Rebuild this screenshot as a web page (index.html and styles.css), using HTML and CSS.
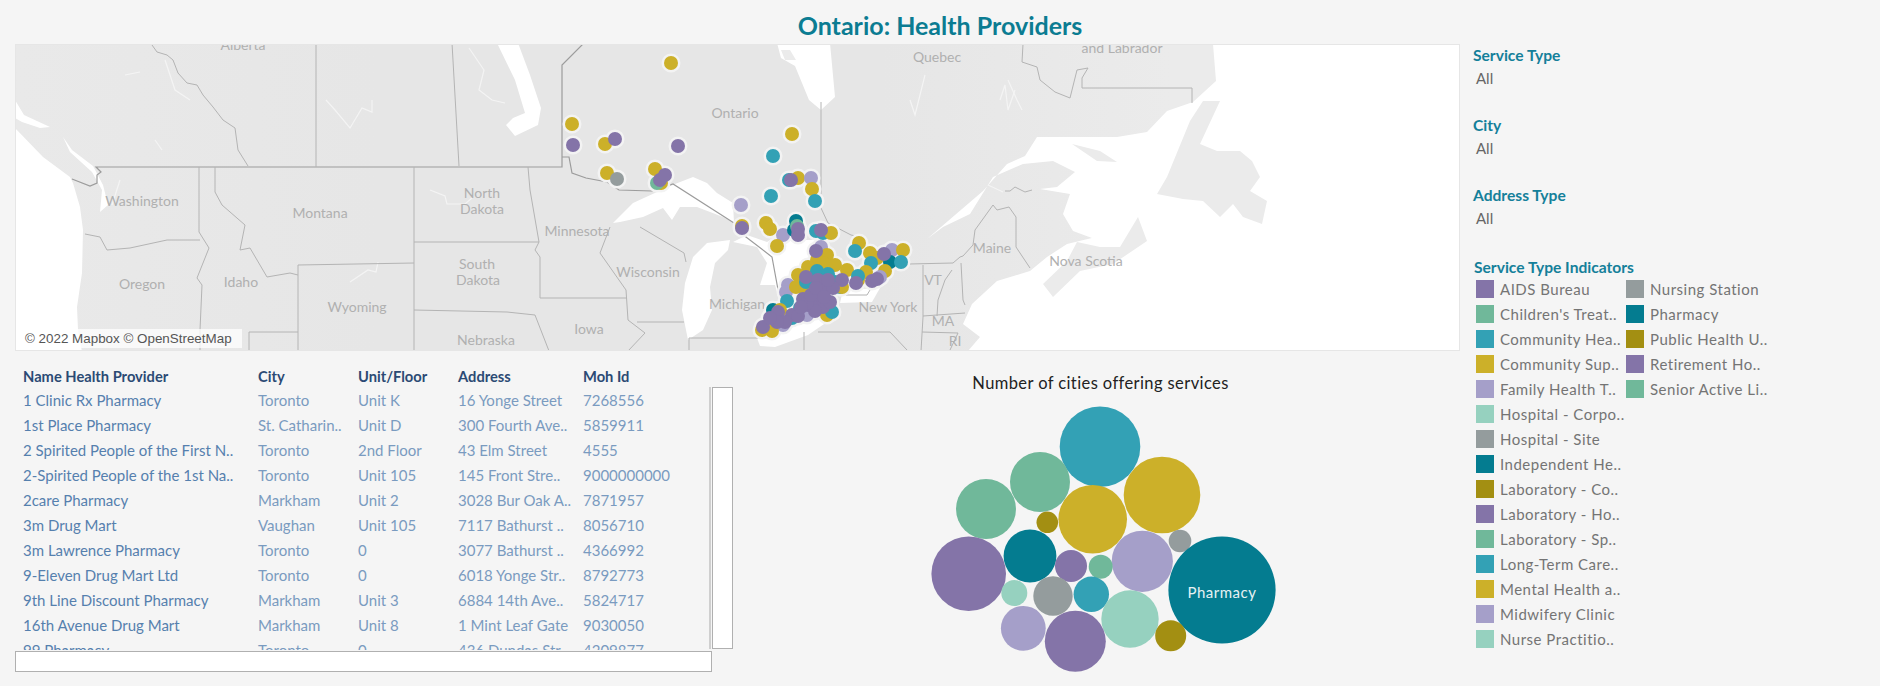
FILE: index.html
```html
<!DOCTYPE html>
<html lang="en">
<head>
<meta charset="utf-8">
<title>Ontario: Health Providers</title>
<link rel="stylesheet" href="styles.css">
</head>
<body>
<div class="page">
  <h1 class="title">Ontario: Health Providers</h1>
  <div class="main">
    <div class="left">
      <div class="map">
        <svg class="map-svg" viewBox="15 44 1445 307" width="1445" height="307">
          <defs>
            <linearGradient id="landfill" x1="0" x2="1" y1="0" y2="0">
              <stop offset="0" stop-color="#e9e9e9"/>
              <stop offset="0.25" stop-color="#e6e6e6"/>
              <stop offset="0.6" stop-color="#e6e6e6"/>
              <stop offset="0.8" stop-color="#ebebeb"/>
            </linearGradient>
          </defs>
          <rect class="land" x="15" y="44" width="1445" height="307"/>
          <g class="water">
            <polygon points="15,128 43,157 70,177 73,183 80,207 83,230 82,273 77,307 78,330 82,352 15,352"/>
            <polygon points="15,100 24,115 50,127 40,128 22,122 15,118"/>
            <polygon points="63,137 72,150 93,166 103,185 108,205 100,212 102,190 92,172 70,152"/>
            <polygon points="613,223 633,203 657,192 675,184 693,177 707,183 717,193 733,203 734,223 723,217 697,207 680,207 672,220 663,208 643,217 620,222"/>
            <polygon points="730,240 707,243 693,257 685,283 682,310 688,340 703,330 712,310 710,287 715,263 728,250"/>
            <polygon points="733,242 747,235 767,242 778,235 800,240 828,240 830,262 813,267 805,290 795,300 780,303 775,285 760,285 767,263 757,247"/>
            <polygon points="757,338 775,325 820,315 830,320 808,335 775,347 760,346"/>
            <polygon points="843,290 880,288 872,302 840,303"/>
            <polygon points="777,43 830,43 835,97 821,110 809,100 795,66 781,58"/>
            <polygon points="497,43 518,43 530,75 541,108 538,125 515,136 506,125 513,118 525,113 515,80"/>
            <polygon points="1213,44 1216,81 1193,102 1167,111 1147,132 1117,137 1037,137 1025,156 1007,164 983,191 927,239 943,227 970,214 993,177 1023,164 1053,161 1075,172 1057,187 1040,189 1070,194 1063,214 1073,231 1100,241 1117,231 1100,236 1067,244 1047,257 1030,271 997,281 972,304 963,324 980,337 968,351 1460,351 1460,44"/>
          </g>
          <g class="land-shape">
            <polygon points="781,50 790,50 796,60 785,60"/>
            <polygon points="1043,284 1067,261 1077,242 1100,247 1120,247 1138,217 1147,241 1113,264 1080,271 1053,297"/>
            <polygon points="1157,194 1167,177 1190,121 1203,101 1220,101 1200,144 1217,151 1240,151 1252,161 1260,177 1250,191 1267,201 1262,224 1243,217 1233,204 1220,217 1203,201 1183,199"/>
            <polygon points="1072,144 1100,151 1117,162 1097,161"/>
          </g>
          <g class="lake-lines">
            <polyline points="326,100 335,110 350,128 362,108 372,112 372,100"/>
            <polyline points="469,48 484,70 479,90 492,100 505,103"/>
            <polyline points="430,190 445,196 447,204 465,204 472,198"/>
            <polyline points="350,282 368,270 376,272 378,262"/>
            <polyline points="165,60 175,90 190,100"/>
            <polyline points="125,75 140,72"/>
            <polyline points="112,205 120,180"/>
            <polyline points="155,140 162,150"/>
            <polyline points="1008,80 1017,100 1022,110"/>
            <polyline points="910,100 915,115 925,75"/>
            <polyline points="988,185 1003,192"/>
            <polyline points="1000,100 1005,85 1008,110 1015,90"/>
          </g>
          <g class="borders">
            <polyline class="main-line" points="72,179 90,186 97,183 97,175 101,172 96,167 562,167 562,65 584,43"/>
            <polyline class="main-line" points="562,157 569,157 572,173 586,178 607,182 619,190 652,191 673,184 734,223"/>
            <polyline class="main-line" points="734,223 737,232 746,237 772,257 779,295"/>
            <polyline points="152,45 157,52 167,55 173,60 178,73 187,83 197,85 203,95 213,107 223,120 235,128 238,150 248,166"/>
            <polyline points="316,43 316,167"/>
            <polyline points="452,43 459,166"/>
            <polyline points="199,167 199,232 209,248 197,278 202,285 200,330 200,351"/>
            <polyline points="85,234 100,237 107,250 130,248 167,240 200,240"/>
            <polyline points="215,167 215,192 222,205 245,225 240,250 250,248 267,277 290,273 298,275"/>
            <polyline points="298,265 414,263"/>
            <polyline points="298,265 298,351"/>
            <polyline points="414,167 414,351"/>
            <polyline points="414,242 539,242"/>
            <polyline points="414,310 507,312 535,315 549,351"/>
            <polyline points="528,167 530,190 539,242 535,250 540,257 540,298 627,298"/>
            <polyline points="610,227 600,253 626,290 628,320 645,333 628,351"/>
            <polyline points="640,227 684,253 686,262"/>
            <polyline points="637,322 684,322"/>
            <polyline points="689,338 758,338"/>
            <polyline points="689,338 689,351"/>
            <polyline points="249,332 298,332"/>
            <polyline points="249,332 249,351"/>
            <polyline points="821,102 821,208 828,223 851,235 865,238"/>
            <polyline points="1023,44 1022,62 1037,67 1040,80 1055,92 1070,98 1075,78 1077,70 1088,68 1082,78 1082,88 1192,88 1192,103"/>
            <polyline points="909,264 953,263 960,257 963,256 973,245 975,230 993,205 997,210 1009,207 1016,217 1016,247 1030,268"/>
            <polyline points="923,265 923,317 921,351"/>
            <polyline points="961,263 963,300 965,305"/>
            <polyline points="952,270 945,280 938,300 937,316"/>
            <polyline points="923,316 965,313"/>
            <polyline points="922,332 958,333 950,350"/>
            <polyline points="846,295 867,295 870,290"/>
            <polyline points="818,332 890,332 907,350"/>
            <polyline points="804,332 804,351"/>
            <polyline points="1005,191 1010,191 1015,187 1025,192 1032,190"/>
          </g>
          <g class="map-labels">
            <text x="243" y="50">Alberta</text>
            <text x="937" y="62">Quebec</text>
            <text x="1122" y="53">and Labrador</text>
            <text x="735" y="118">Ontario</text>
            <text x="142" y="206">Washington</text>
            <text x="320" y="218">Montana</text>
            <text x="482" y="198">North</text>
            <text x="482" y="214">Dakota</text>
            <text x="577" y="236">Minnesota</text>
            <text x="142" y="289">Oregon</text>
            <text x="241" y="287">Idaho</text>
            <text x="477" y="269">South</text>
            <text x="478" y="285">Dakota</text>
            <text x="648" y="277">Wisconsin</text>
            <text x="357" y="312">Wyoming</text>
            <text x="589" y="334">Iowa</text>
            <text x="486" y="345">Nebraska</text>
            <text x="737" y="309">Michigan</text>
            <text x="888" y="312">New York</text>
            <text x="992" y="253">Maine</text>
            <text x="1086" y="266">Nova Scotia</text>
            <text x="933" y="285">VT</text>
            <text x="943" y="326">MA</text>
            <text x="955" y="346">RI</text>
          </g>
          <use href="#dots" class="halo"/>
          <g id="dots">
            <circle class="yl" cx="671" cy="63" r="7"/>
            <circle class="yl" cx="572" cy="124" r="7"/>
            <circle class="pu" cx="573" cy="145" r="7"/>
            <circle class="yl" cx="605" cy="144" r="7"/>
            <circle class="pu" cx="615" cy="139" r="7"/>
            <circle class="pu" cx="678" cy="146" r="7"/>
            <circle class="yl" cx="607" cy="173" r="7"/>
            <circle class="gy" cx="617" cy="179" r="7"/>
            <circle class="yl" cx="655" cy="169" r="7"/>
            <circle class="yl" cx="661" cy="183" r="7"/>
            <circle class="gr" cx="657" cy="183" r="7"/>
            <circle class="pu" cx="660" cy="180" r="7"/>
            <circle class="pu" cx="665" cy="175" r="7"/>
            <circle class="yl" cx="792" cy="134" r="7"/>
            <circle class="tl" cx="773" cy="156" r="7"/>
            <circle class="tl" cx="789" cy="180" r="7"/>
            <circle class="yl" cx="798" cy="178" r="7"/>
            <circle class="pu" cx="791" cy="180" r="7"/>
            <circle class="lp" cx="811" cy="178" r="7"/>
            <circle class="yl" cx="812" cy="189" r="7"/>
            <circle class="tl" cx="771" cy="196" r="7"/>
            <circle class="tl" cx="815" cy="201" r="7"/>
            <circle class="lp" cx="741" cy="205" r="7"/>
            <circle class="yl" cx="742" cy="226" r="7"/>
            <circle class="pu" cx="742" cy="228" r="7"/>
            <circle class="yl" cx="766" cy="223" r="7"/>
            <circle class="yl" cx="770" cy="229" r="7"/>
            <circle class="lp" cx="783" cy="235" r="7"/>
            <circle class="yl" cx="777" cy="246" r="7"/>
            <circle class="dk" cx="796" cy="221" r="7"/>
            <circle class="dk" cx="794" cy="230" r="7"/>
            <circle class="gr" cx="797" cy="226" r="7"/>
            <circle class="pu" cx="798" cy="229" r="7"/>
            <circle class="pu" cx="798" cy="235" r="7"/>
            <circle class="tl" cx="816" cy="231" r="7"/>
            <circle class="tl" cx="823" cy="233" r="7"/>
            <circle class="yl" cx="831" cy="233" r="7"/>
            <circle class="pu" cx="821" cy="230" r="7"/>
            <circle class="lp" cx="821" cy="247" r="7"/>
            <circle class="yl" cx="827" cy="255" r="7"/>
            <circle class="yl" cx="817" cy="260" r="7"/>
            <circle class="yl" cx="808" cy="267" r="7"/>
            <circle class="yl" cx="823" cy="263" r="7"/>
            <circle class="yl" cx="835" cy="265" r="7"/>
            <circle class="yl" cx="847" cy="270" r="7"/>
            <circle class="yl" cx="798" cy="275" r="7"/>
            <circle class="yl" cx="815" cy="270" r="7"/>
            <circle class="lp" cx="788" cy="285" r="7"/>
            <circle class="lp" cx="786" cy="292" r="7"/>
            <circle class="yl" cx="796" cy="287" r="7"/>
            <circle class="yl" cx="806" cy="292" r="7"/>
            <circle class="pu" cx="816" cy="251" r="7"/>
            <circle class="tl" cx="817" cy="271" r="7"/>
            <circle class="tl" cx="828" cy="274" r="7"/>
            <circle class="tl" cx="806" cy="282" r="7"/>
            <circle class="pu" cx="806" cy="277" r="7"/>
            <circle class="tl" cx="787" cy="301" r="7"/>
            <circle class="tl" cx="835" cy="282" r="7"/>
            <circle class="tl" cx="840" cy="287" r="7"/>
            <circle class="yl" cx="842" cy="287" r="7"/>
            <circle class="pu" cx="842" cy="280" r="7"/>
            <circle class="yl" cx="827" cy="315" r="7"/>
            <circle class="tl" cx="832" cy="312" r="7"/>
            <circle class="dk" cx="773" cy="310" r="7"/>
            <circle class="yl" cx="780" cy="310" r="7"/>
            <circle class="tl" cx="800" cy="308" r="7"/>
            <circle class="lp" cx="807" cy="315" r="7"/>
            <circle class="tl" cx="792" cy="318" r="7"/>
            <circle class="lp" cx="783" cy="325" r="7"/>
            <circle class="yl" cx="772" cy="331" r="7"/>
            <circle class="yl" cx="762" cy="330" r="7"/>
            <circle class="pu" cx="778" cy="312" r="7"/>
            <circle class="pu" cx="792" cy="315" r="7"/>
            <circle class="pu" cx="785" cy="322" r="7"/>
            <circle class="pu" cx="798" cy="316" r="7"/>
            <circle class="pu" cx="777" cy="322" r="7"/>
            <circle class="pu" cx="763" cy="327" r="7"/>
            <circle class="pu" cx="770" cy="318" r="7"/>
            <circle class="pu" cx="803" cy="299" r="7"/>
            <circle class="pu" cx="808" cy="305" r="7"/>
            <circle class="pu" cx="815" cy="301" r="7"/>
            <circle class="pu" cx="820" cy="295" r="7"/>
            <circle class="pu" cx="818" cy="280" r="7"/>
            <circle class="pu" cx="827" cy="288" r="7"/>
            <circle class="pu" cx="833" cy="288" r="7"/>
            <circle class="pu" cx="823" cy="307" r="7"/>
            <circle class="pu" cx="815" cy="311" r="7"/>
            <circle class="pu" cx="807" cy="303" r="7"/>
            <circle class="pu" cx="830" cy="302" r="7"/>
            <circle class="pu" cx="811" cy="295" r="7"/>
            <circle class="pu" cx="816" cy="288" r="7"/>
            <circle class="pu" cx="824" cy="297" r="7"/>
            <circle class="pu" cx="801" cy="307" r="7"/>
            <circle class="pu" cx="828" cy="280" r="7"/>
            <circle class="yl" cx="859" cy="243" r="7"/>
            <circle class="tl" cx="855" cy="251" r="7"/>
            <circle class="yl" cx="870" cy="253" r="7"/>
            <circle class="yl" cx="877" cy="258" r="7"/>
            <circle class="lp" cx="892" cy="250" r="7"/>
            <circle class="yl" cx="903" cy="250" r="7"/>
            <circle class="dk" cx="890" cy="262" r="7"/>
            <circle class="pu" cx="884" cy="254" r="7"/>
            <circle class="tl" cx="901" cy="262" r="7"/>
            <circle class="tl" cx="871" cy="263" r="7"/>
            <circle class="yl" cx="885" cy="271" r="7"/>
            <circle class="yl" cx="866" cy="272" r="7"/>
            <circle class="yl" cx="858" cy="280" r="7"/>
            <circle class="tl" cx="858" cy="276" r="7"/>
            <circle class="lp" cx="880" cy="277" r="7"/>
            <circle class="pu" cx="856" cy="283" r="7"/>
            <circle class="pu" cx="872" cy="281" r="7"/>
            <circle class="pu" cx="877" cy="279" r="7"/>
          </g>
        </svg>
        <div class="attribution">© 2022 Mapbox © OpenStreetMap</div>
      </div>
      <div class="lower">
        <div class="table-panel">
          <div class="table-clip">
            <div class="row head"><span>Name Health Provider</span><span>City</span><span>Unit/Floor</span><span>Address</span><span>Moh Id</span></div>
            <div class="row"><span>1 Clinic Rx Pharmacy</span><span>Toronto</span><span>Unit K</span><span>16 Yonge Street</span><span>7268556</span></div>
            <div class="row"><span>1st Place Pharmacy</span><span>St. Catharin..</span><span>Unit D</span><span>300 Fourth Ave..</span><span>5859911</span></div>
            <div class="row"><span>2 Spirited People of the First N..</span><span>Toronto</span><span>2nd Floor</span><span>43 Elm Street</span><span>4555</span></div>
            <div class="row"><span>2-Spirited People of the 1st Na..</span><span>Toronto</span><span>Unit 105</span><span>145 Front Stre..</span><span>9000000000</span></div>
            <div class="row"><span>2care Pharmacy</span><span>Markham</span><span>Unit 2</span><span>3028 Bur Oak A..</span><span>7871957</span></div>
            <div class="row"><span>3m Drug Mart</span><span>Vaughan</span><span>Unit 105</span><span>7117 Bathurst ..</span><span>8056710</span></div>
            <div class="row"><span>3m Lawrence Pharmacy</span><span>Toronto</span><span>0</span><span>3077 Bathurst ..</span><span>4366992</span></div>
            <div class="row"><span>9-Eleven Drug Mart Ltd</span><span>Toronto</span><span>0</span><span>6018 Yonge Str..</span><span>8792773</span></div>
            <div class="row"><span>9th Line Discount Pharmacy</span><span>Markham</span><span>Unit 3</span><span>6884 14th Ave..</span><span>5824717</span></div>
            <div class="row"><span>16th Avenue Drug Mart</span><span>Markham</span><span>Unit 8</span><span>1 Mint Leaf Gate</span><span>9030050</span></div>
            <div class="row"><span>99 Pharmacy</span><span>Toronto</span><span>0</span><span>436 Dundas Str..</span><span>4209877</span></div>
          </div>
          <div class="scroll-v"></div>
          <div class="scroll-h"></div>
        </div>
        <div class="chart">
          <h2 class="chart-title">Number of cities offering services</h2>
          <svg class="bubbles" viewBox="900 396 400 290" width="400" height="290">
            <circle class="tl" cx="1100" cy="446.7" r="40.3"/>
            <circle class="gr" cx="1040" cy="482" r="30"/>
            <circle class="gr" cx="986" cy="509" r="30"/>
            <circle class="yl" cx="1162" cy="495" r="38.3"/>
            <circle class="yl" cx="1092.7" cy="519.3" r="34.3"/>
            <circle class="ol" cx="1047.3" cy="522.3" r="10.8"/>
            <circle class="gy" cx="1180" cy="541" r="11.3"/>
            <circle class="lp" cx="1142.3" cy="561.3" r="30.6"/>
            <circle class="dk" cx="1222" cy="590" r="53.6"/>
            <circle class="pu" cx="968.7" cy="573.7" r="37.3"/>
            <circle class="dk" cx="1030" cy="556" r="26.4"/>
            <circle class="pu" cx="1071" cy="566" r="16"/>
            <circle class="gr" cx="1100.7" cy="566.7" r="12"/>
            <circle class="tl" cx="1091.3" cy="594.3" r="17.7"/>
            <circle class="gy" cx="1053" cy="596" r="19.7"/>
            <circle class="mt" cx="1014.3" cy="593" r="13"/>
            <circle class="mt" cx="1130" cy="619" r="28.7"/>
            <circle class="lp" cx="1023.3" cy="628.3" r="22.4"/>
            <circle class="pu" cx="1075.3" cy="641.3" r="30.5"/>
            <circle class="ol" cx="1170.7" cy="635.7" r="15.5"/>
            <text class="bubble-label" x="1222" y="598">Pharmacy</text>
          </svg>
        </div>
      </div>
    </div>
    <aside class="side">
      <div class="filter"><div class="side-head">Service Type</div><div class="filter-value">All</div></div>
      <div class="filter"><div class="side-head">City</div><div class="filter-value">All</div></div>
      <div class="filter"><div class="side-head">Address Type</div><div class="filter-value">All</div></div>
      <div class="side-head legend-head">Service Type Indicators</div>
      <div class="legend">
        <div class="item"><i class="sw pu-b"></i>AIDS Bureau</div>
        <div class="item"><i class="sw gr-b"></i>Children's Treat..</div>
        <div class="item"><i class="sw tl-b"></i>Community Hea..</div>
        <div class="item"><i class="sw yl-b"></i>Community Sup..</div>
        <div class="item"><i class="sw lp-b"></i>Family Health T..</div>
        <div class="item"><i class="sw mt-b"></i>Hospital - Corpo..</div>
        <div class="item"><i class="sw gy-b"></i>Hospital - Site</div>
        <div class="item"><i class="sw dk-b"></i>Independent He..</div>
        <div class="item"><i class="sw ol-b"></i>Laboratory - Co..</div>
        <div class="item"><i class="sw pu-b"></i>Laboratory - Ho..</div>
        <div class="item"><i class="sw gr-b"></i>Laboratory - Sp..</div>
        <div class="item"><i class="sw tl-b"></i>Long-Term Care..</div>
        <div class="item"><i class="sw yl-b"></i>Mental Health a..</div>
        <div class="item"><i class="sw lp-b"></i>Midwifery Clinic</div>
        <div class="item"><i class="sw mt-b"></i>Nurse Practitio..</div>
        <div class="item"><i class="sw gy-b"></i>Nursing Station</div>
        <div class="item"><i class="sw dk-b"></i>Pharmacy</div>
        <div class="item"><i class="sw ol-b"></i>Public Health U..</div>
        <div class="item"><i class="sw pu-b"></i>Retirement Ho..</div>
        <div class="item"><i class="sw gr-b"></i>Senior Active Li..</div>
      </div>
    </aside>
  </div>
</div>
</body>
</html>
```
FILE: styles.css
```css
* { box-sizing: border-box; }
html, body { margin: 0; padding: 0; }
body {
  width: 1880px;
  height: 686px;
  overflow: hidden;
  background: #f5f5f5;
  font-family: "Lato", "Noto Sans", sans-serif;
}
.page { display: flex; flex-direction: column; }
.title {
  margin: 0;
  height: 44px;
  line-height: 50px;
  text-align: center;
  font-size: 25px;
  font-weight: 700;
  color: #0b7c92;
}
.main { display: flex; padding-left: 15px; }
.left { width: 1445px; display: flex; flex-direction: column; }

/* map */
.map {
  position: relative;
  width: 1445px;
  height: 307px;
  overflow: hidden;
  outline: 1px solid #e6e6e6;
  outline-offset: -1px;
}
.map-svg { display: block; }
.land { fill: url(#landfill); }
.water { filter: blur(0.7px); }
.water polygon { fill: #fff; }
.land-shape { filter: blur(0.6px); }
.land-shape polygon { fill: #ebebeb; }
.lake-lines polyline { fill: none; stroke: #f4f4f4; stroke-width: 1.2; }
.borders polyline { fill: none; stroke: #b4b4b4; stroke-width: 1; }
.borders .main-line { stroke: #9c9c9c; stroke-width: 1.2; }
.map-labels text {
  fill: #b0b0b0;
  font-size: 14px;
  text-anchor: middle;
}
.halo { stroke: #f3f3f3; stroke-width: 5; }
.attribution {
  position: absolute;
  left: 5px;
  bottom: 3px;
  width: 222px;
  height: 19px;
  padding-left: 5px;
  background: rgba(255, 255, 255, 0.75);
  font: 13.4px/19px "Liberation Sans", sans-serif;
  color: #555;
  white-space: nowrap;
}

/* colours */
.pu { fill: #8474a8; }
.tl { fill: #33a1b5; }
.yl { fill: #ccb029; }
.lp { fill: #a59fc9; }
.gr { fill: #70b89a; }
.mt { fill: #96d1bf; }
.gy { fill: #949c9d; }
.dk { fill: #047c90; }
.ol { fill: #a38f12; }
.pu-b { background: #8474a8; }
.tl-b { background: #33a1b5; }
.yl-b { background: #ccb029; }
.lp-b { background: #a59fc9; }
.gr-b { background: #70b89a; }
.mt-b { background: #96d1bf; }
.gy-b { background: #949c9d; }
.dk-b { background: #047c90; }
.ol-b { background: #a38f12; }

/* lower band */
.lower { display: flex; height: 335px; }
.table-panel { position: relative; width: 718px; height: 321px; }
.table-clip {
  height: 299px;
  overflow: hidden;
  padding: 13px 0 0 8px;
}
.row {
  display: grid;
  grid-template-columns: 235px 100px 100px 125px 120px;
  height: 25px;
  line-height: 25px;
  font-size: 15px;
  color: #7a9bc0;
  white-space: nowrap;
}
.row span:first-child { color: #5580ae; }
.row.head { height: 24px; line-height: 24px; }
.row.head span { color: #2b4a74; font-weight: 700; font-size: 14.7px; }
.scroll-v {
  position: absolute;
  left: 697px;
  top: 36px;
  width: 21px;
  height: 262px;
  background: #fff;
  border: 1px solid #b0b0b0;
  box-shadow: -1px 0 0 #f5f5f5, -3px 0 0 #cfcfcf;
}
.scroll-h {
  position: absolute;
  left: 0;
  top: 300px;
  width: 697px;
  height: 21px;
  background: #fff;
  border: 1px solid #b0b0b0;
}

/* chart */
.chart { position: relative; width: 727px; }
.chart-title {
  margin: 0;
  padding: 22px 0 0 0;
  width: 735px;
  text-align: center;
  font-size: 16.5px;
  font-weight: 400;
  letter-spacing: .4px;
  color: #222;
  line-height: 20px;
}
.bubbles { position: absolute; left: 167px; top: 45px; }
.bubble-label {
  fill: #e6f2f4;
  font-size: 15px;
  text-anchor: middle;
  letter-spacing: .5px;
}

/* side */
.side { padding: 2px 0 0 13px; width: 420px; }
.filter { height: 70px; }
.side-head {
  color: #14809a;
  font-size: 15.6px;
  font-weight: 700;
  line-height: 18px;
}
.filter-value {
  padding: 4px 0 0 3px;
  font-size: 15px;
  line-height: 20px;
  color: #666;
}
.legend-head { margin-left: 1px; margin-top: 2px; }
.legend {
  display: grid;
  grid-auto-flow: column;
  grid-template-rows: repeat(15, 18px);
  grid-template-columns: 150px 150px;
  row-gap: 7px;
  margin: 4px 0 0 3px;
}
.item {
  display: flex;
  align-items: center;
  gap: 6px;
  font-size: 15px;
  letter-spacing: .5px;
  color: #747474;
  white-space: nowrap;
}
.sw { display: block; width: 18px; height: 18px; flex: none; }
```
